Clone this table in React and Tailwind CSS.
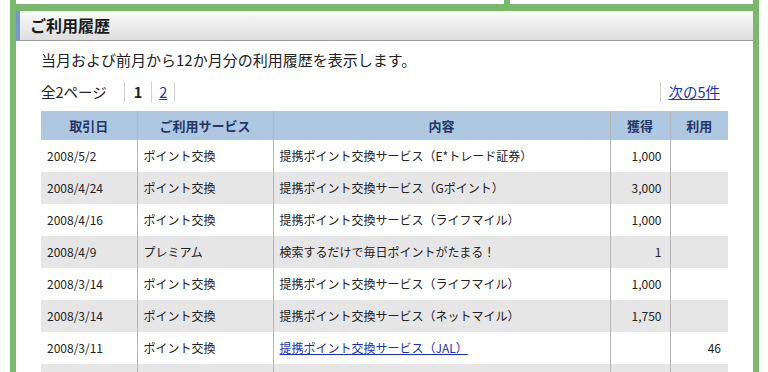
const rows = [
  { date: '2008/5/2', service: 'ポイント交換', detail: '提携ポイント交換サービス（E*トレード証券）', earn: '1,000', use: '' },
  { date: '2008/4/24', service: 'ポイント交換', detail: '提携ポイント交換サービス（Gポイント）', earn: '3,000', use: '' },
  { date: '2008/4/16', service: 'ポイント交換', detail: '提携ポイント交換サービス（ライフマイル）', earn: '1,000', use: '' },
  { date: '2008/4/9', service: 'プレミアム', detail: '検索するだけで毎日ポイントがたまる！', earn: '1', use: '' },
  { date: '2008/3/14', service: 'ポイント交換', detail: '提携ポイント交換サービス（ライフマイル）', earn: '1,000', use: '' },
  { date: '2008/3/14', service: 'ポイント交換', detail: '提携ポイント交換サービス（ネットマイル）', earn: '1,750', use: '' },
  { date: '2008/3/11', service: 'ポイント交換', detail: '提携ポイント交換サービス（JAL）', earn: '', use: '46', link: true },
  { date: '', service: '', detail: '', earn: '', use: '' }
]

const font = { fontFamily: '"Noto Sans CJK JP", "DejaVu Sans", sans-serif' }

const App = () => {
  return (
    <div className="w-[768px] h-[372px] overflow-hidden bg-white text-[#222]" style={font}>
      <div className="ml-[10px] w-[749px] h-full bg-[#7ab86c] px-[6px]">
        <div className="flex h-[4px] gap-[6px]">
          <div className="w-[488px] bg-white" />
          <div className="flex-1 bg-white" />
        </div>
        <div className="mt-[7px] bg-white h-[400px]">
          <div className="flex h-[30px] border-b border-[#9a9a9a] bg-gradient-to-b from-[#fafafa] to-[#dedede]">
            <div className="w-[4px] bg-[#6f9bcf]" />
            <h2 className="pl-[10px] text-[16px] font-bold leading-[28px] text-[#1a1a1a]">ご利用履歴</h2>
          </div>
          <div className="px-[25px]">
            <p className="pt-[9px] text-[15px] leading-[20px]">当月および前月から12か月分の利用履歴を表示します。</p>
            <div className="mt-[10px] flex items-center h-[24px] text-[14.5px]">
              <span>全2ページ</span>
              <span className="ml-[17px] h-[20px] w-px bg-[#d0d0d0]" />
              <span className="px-[9px] font-bold">1</span>
              <span className="h-[20px] w-px bg-[#d0d0d0]" />
              <a href="#" className="px-[7px] text-[#1a2fc0] underline">2</a>
              <span className="h-[20px] w-px bg-[#d0d0d0]" />
              <span className="ml-auto h-[20px] w-px bg-[#d0d0d0]" />
              <a href="#" className="pl-[7px] pr-[8px] text-[#1a2fc0] underline">次の5件</a>
            </div>
            <table className="mt-[7px] w-[687px] border-collapse table-fixed text-[12px]">
              <colgroup>
                <col className="w-[96px]" />
                <col className="w-[136px]" />
                <col className="w-[337px]" />
                <col className="w-[60px]" />
                <col className="w-[58px]" />
              </colgroup>
              <thead>
                <tr className="h-[29px] bg-[#afc8e1] text-[13px] font-bold text-[#253566]">
                  <th className="border-r border-[#b5b5b5] font-bold">取引日</th>
                  <th className="border-r border-[#b5b5b5] font-bold">ご利用サービス</th>
                  <th className="border-r border-[#b5b5b5] font-bold">内容</th>
                  <th className="border-r border-[#b5b5b5] font-bold">獲得</th>
                  <th className="font-bold">利用</th>
                </tr>
              </thead>
              <tbody>
                {rows.map((r, i) => (
                  <tr key={i} className={`h-[32px] ${i % 2 === 1 ? 'bg-[#e6e6e6]' : 'bg-white'}`}>
                    <td className="border-r border-[#b5b5b5] pl-[6px]">{r.date}</td>
                    <td className="border-r border-[#b5b5b5] pl-[6px]">{r.service}</td>
                    <td className="border-r border-[#b5b5b5] pl-[6px]">
                      {r.link ? <a href="#" className="text-[#1a2fc0] underline">{r.detail}</a> : r.detail}
                    </td>
                    <td className="border-r border-[#b5b5b5] pr-[8px] text-right">{r.earn}</td>
                    <td className="pr-[7px] text-right">{r.use}</td>
                  </tr>
                ))}
              </tbody>
            </table>
          </div>
        </div>
      </div>
    </div>
  )
}

export default App
